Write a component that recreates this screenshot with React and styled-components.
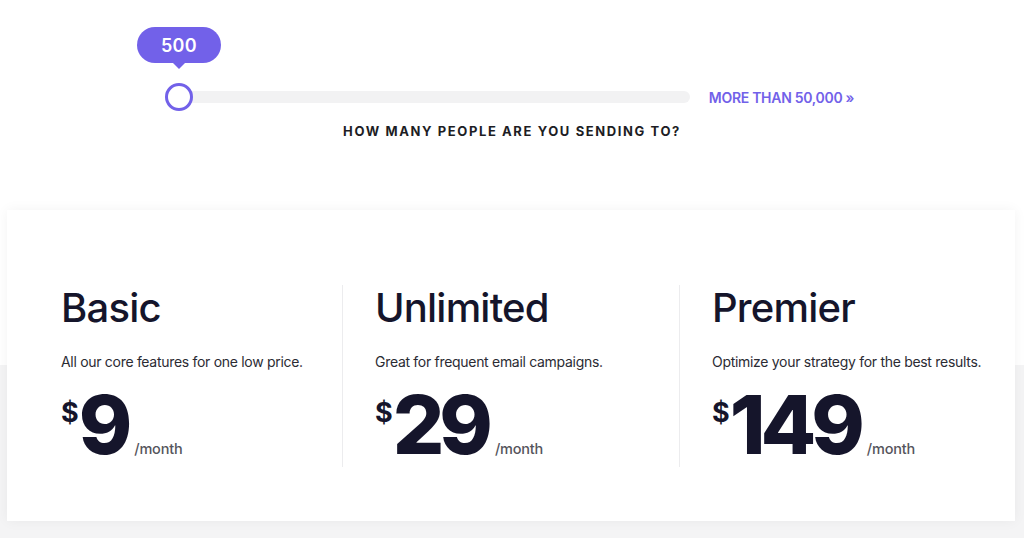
import React from "react";
import styled, { createGlobalStyle } from "styled-components";

const GlobalStyle = createGlobalStyle`
  html, body { margin: 0; padding: 0; background: #ffffff; }
  body { font-family: Inter, "Noto Sans", Arial, sans-serif; color: #15152b; -webkit-font-smoothing: antialiased; }
`;

const PURPLE = "#7261e9";

const Page = styled.div`
  width: 1024px;
  min-height: 538px;
  display: flex;
  flex-direction: column;
`;

const SliderSection = styled.section`
  padding: 83px 0 71px;
  display: flex;
  flex-direction: column;
  align-items: center;
`;

const SliderRow = styled.div`
  display: flex;
  align-items: center;
  gap: 19px;
  margin-left: -5px;
`;

const TrackWrap = styled.div`
  position: relative;
  width: 525px;
  height: 28px;
  display: flex;
  align-items: center;
  padding-left: 14px;
  box-sizing: border-box;
`;

const Bar = styled.div`
  flex: 1;
  height: 12px;
  border-radius: 6px;
  background: #f2f2f3;
`;

const Thumb = styled.div`
  position: absolute;
  left: 0;
  top: 0;
  width: 28px;
  height: 28px;
  box-sizing: border-box;
  border-radius: 50%;
  border: 3px solid ${PURPLE};
  background: #fff;
`;

const Bubble = styled.div`
  position: absolute;
  left: 50%;
  bottom: calc(100% + 23px);
  transform: translateX(-50%);
  width: 84px;
  height: 36px;
  border-radius: 18px;
  background: ${PURPLE};
  color: #fff;
  font-weight: 600;
  font-size: 18px;
  display: flex;
  align-items: center;
  justify-content: center;
  letter-spacing: 0.3px;

  &::after {
    content: "";
    position: absolute;
    left: 50%;
    top: 100%;
    transform: translateX(-50%);
    border-left: 6px solid transparent;
    border-right: 6px solid transparent;
    border-top: 6px solid ${PURPLE};
  }
`;

const MoreLink = styled.a`
  color: ${PURPLE};
  font-size: 14px;
  font-weight: 600;
  letter-spacing: -0.3px;
  text-decoration: none;
  white-space: nowrap;
`;

const Question = styled.div`
  margin-top: 12px;
  font-size: 13px;
  line-height: 16px;
  font-weight: 700;
  letter-spacing: 1.6px;
  color: #1d1d24;
`;

const PricingSection = styled.section`
  flex: 1;
  padding: 0 9px 17px 7px;
  background: linear-gradient(to bottom, #ffffff 0, #ffffff 155px, #f4f4f5 155px);
`;

const Card = styled.div`
  height: 311px;
  box-sizing: border-box;
  background: #ffffff;
  box-shadow: 0 0 12px rgba(0, 0, 0, 0.05);
  padding: 75px 0 0 54px;
  display: grid;
  grid-template-columns: 281px 337px 1fr;
  align-items: start;
`;

const Plan = styled.div`
  height: 182px;
  box-sizing: border-box;
  padding-left: ${(p) => (p.$first ? "0" : "32px")};
  border-left: ${(p) => (p.$first ? "none" : "1px solid #ececee")};
`;

const PlanName = styled.h2`
  margin: 3px 0 0;
  font-size: 40px;
  line-height: 40px;
  font-weight: 500;
  letter-spacing: -0.8px;
  color: #15152b;
`;

const PlanDesc = styled.p`
  margin: 24px 0 0;
  font-size: 14px;
  line-height: 20px;
  color: #2b2b33;
  letter-spacing: -0.3px;
  white-space: nowrap;
`;

const PriceRow = styled.div`
  margin-top: 13px;
  display: flex;
  align-items: baseline;
`;

const Dollar = styled.span`
  align-self: flex-start;
  margin-top: 14px;
  font-size: 27px;
  line-height: 28px;
  font-weight: 700;
  color: #15152b;
`;

const Amount = styled.span`
  font-size: 81px;
  line-height: 81px;
  font-weight: 800;
  letter-spacing: -5px;
  color: #15152b;
`;

const Period = styled.span`
  margin-left: 7px;
  font-size: 14.5px;
  font-weight: 500;
  color: #55555c;
  letter-spacing: -0.2px;
`;

const plans = [
  { name: "Basic", desc: "All our core features for one low price.", price: "9" },
  { name: "Unlimited", desc: "Great for frequent email campaigns.", price: "29" },
  { name: "Premier", desc: "Optimize your strategy for the best results.", price: "149" },
];

export default function App() {
  return (
    <Page>
      <GlobalStyle />
      <SliderSection>
        <SliderRow>
          <TrackWrap>
            <Bar />
            <Thumb>
              <Bubble>500</Bubble>
            </Thumb>
          </TrackWrap>
          <MoreLink href="#">MORE THAN 50,000 »</MoreLink>
        </SliderRow>
        <Question>HOW MANY PEOPLE ARE YOU SENDING TO?</Question>
      </SliderSection>
      <PricingSection>
        <Card>
          {plans.map((p, i) => (
            <Plan key={p.name} $first={i === 0}>
              <PlanName>{p.name}</PlanName>
              <PlanDesc>{p.desc}</PlanDesc>
              <PriceRow>
                <Dollar>$</Dollar>
                <Amount>{p.price}</Amount>
                <Period>/month</Period>
              </PriceRow>
            </Plan>
          ))}
        </Card>
      </PricingSection>
    </Page>
  );
}
